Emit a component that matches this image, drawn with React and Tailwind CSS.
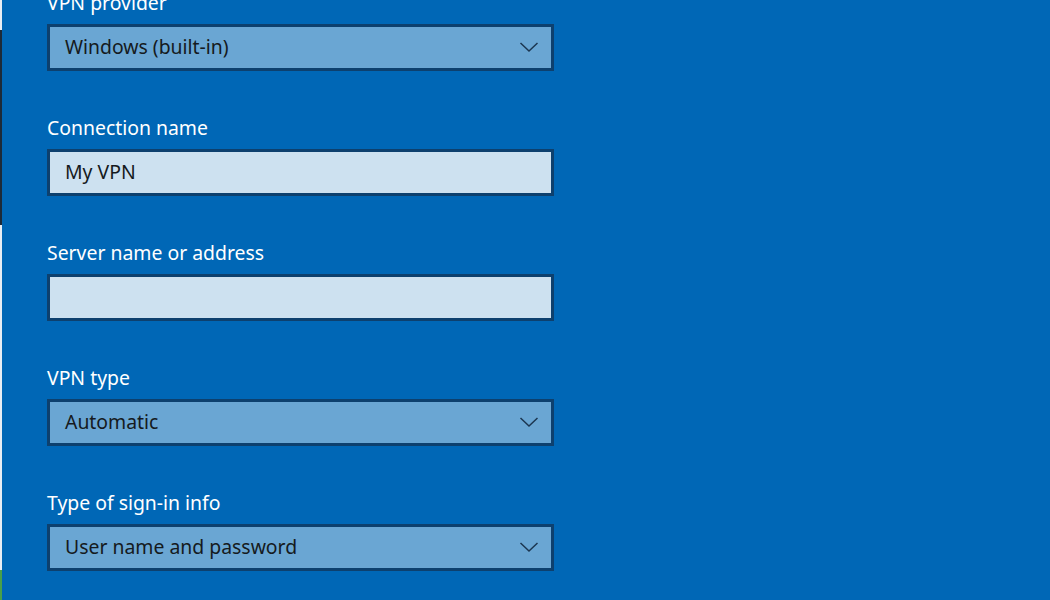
import React from "react";

function Chevron() {
  return (
    <svg width="20" height="12" viewBox="0 0 20 12" className="shrink-0">
      <path d="M1.5 2 L10 10 L18.5 2" fill="none" stroke="#1c3650" strokeWidth="1.5" />
    </svg>
  );
}

function Field({ label, value, kind }) {
  const isSelect = kind === "select";
  return (
    <div className="flex flex-col">
      <div className="h-[28px] leading-[28px] text-[19.4px] text-white">{label}</div>
      <div
        className={
          "mt-[7px] w-[507px] h-[47px] border-[3px] border-[#0d406e] flex items-center pl-[15px] pr-[12px] pb-[2px] text-[19.4px] text-[#151a20] " +
          (isSelect ? "bg-[#6aa6d3]" : "bg-[#cde1f0]")
        }
      >
        <span className="flex-1">{value}</span>
        {isSelect && <Chevron />}
      </div>
    </div>
  );
}

export default function App() {
  return (
    <div
      className="w-[1050px] h-[600px] overflow-hidden bg-[#0067b6] flex"
      style={{ fontFamily: '"Noto Sans", "Open Sans", sans-serif' }}
    >
      <div className="w-[2px] h-full bg-[#e8eef4] flex flex-col">
        <div className="h-[30px]" />
        <div className="h-[195px] bg-[#1d2a38]" />
        <div className="flex-1" />
        <div className="h-[30px] bg-[#4aa04a]" />
      </div>
      <div className="flex flex-col pl-[45px] mt-[-11px] gap-[43px]">
        <Field label="VPN provider" value="Windows (built-in)" kind="select" />
        <Field label="Connection name" value="My VPN" kind="text" />
        <Field label="Server name or address" value="" kind="text" />
        <Field label="VPN type" value="Automatic" kind="select" />
        <Field label="Type of sign-in info" value="User name and password" kind="select" />
      </div>
    </div>
  );
}
